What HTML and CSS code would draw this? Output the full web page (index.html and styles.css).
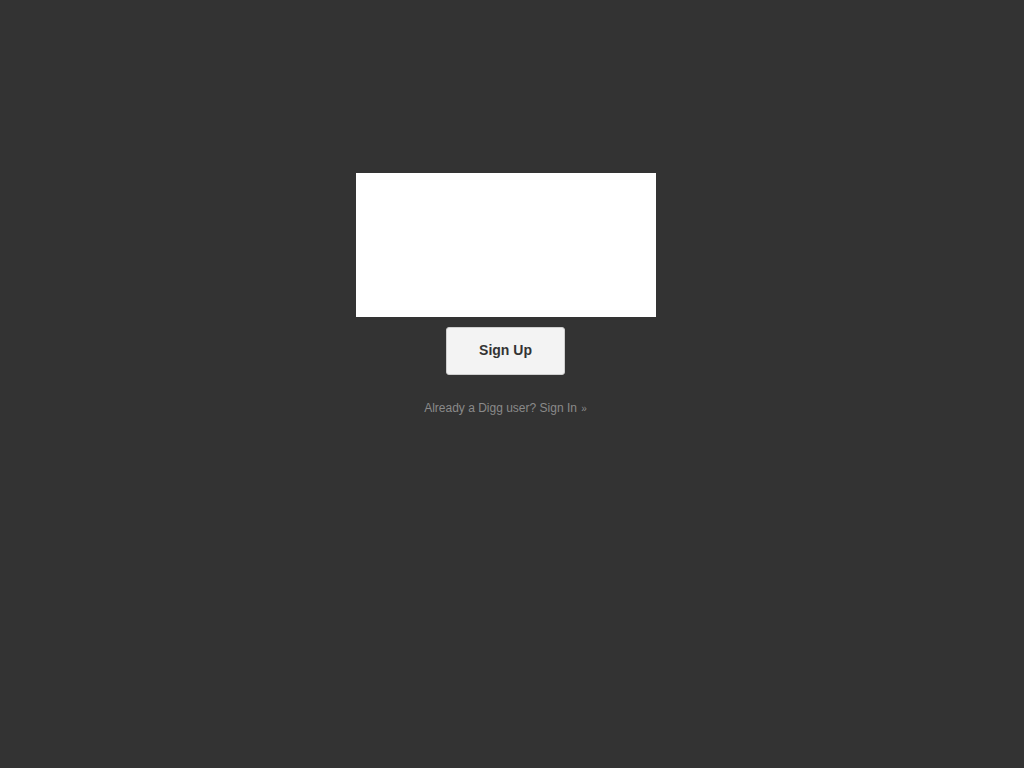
FILE: index.html
```html
<!DOCTYPE html>
<html>
<head>
<meta charset="utf-8">
<link rel="stylesheet" href="styles.css">
</head>
<body>
<div class="page">
  <div class="panel"></div>
  <button class="signup">Sign Up</button>
  <p class="signin">Already a Digg user? <a href="#">Sign In <span class="arrow">&raquo;</span></a></p>
</div>
</body>
</html>
```
FILE: styles.css
```css
html, body {
  margin: 0;
  padding: 0;
  background: #333333;
  height: 100%;
}
.page {
  width: 1011px;
  display: flex;
  flex-direction: column;
  align-items: center;
  padding-top: 173px;
  font-family: "Liberation Sans", Arial, sans-serif;
}
.panel {
  width: 300px;
  height: 144px;
  background: #ffffff;
}
.signup {
  margin-top: 10px;
  width: 119px;
  height: 48px;
  background: #f3f3f3;
  border: 1px solid #cfcfcf;
  border-radius: 3px;
  font-family: "Liberation Sans", Arial, sans-serif;
  font-size: 14px;
  font-weight: bold;
  color: #333333;
  padding: 0 0 3px;
}
.signin {
  margin: 26px 0 0;
  font-size: 12px;
  line-height: 15px;
  color: #8a8a8a;
}
.signin a {
  color: #8a8a8a;
  text-decoration: none;
}
.signin .arrow {
  font-size: 10px;
  margin-left: 1px;
}
```
